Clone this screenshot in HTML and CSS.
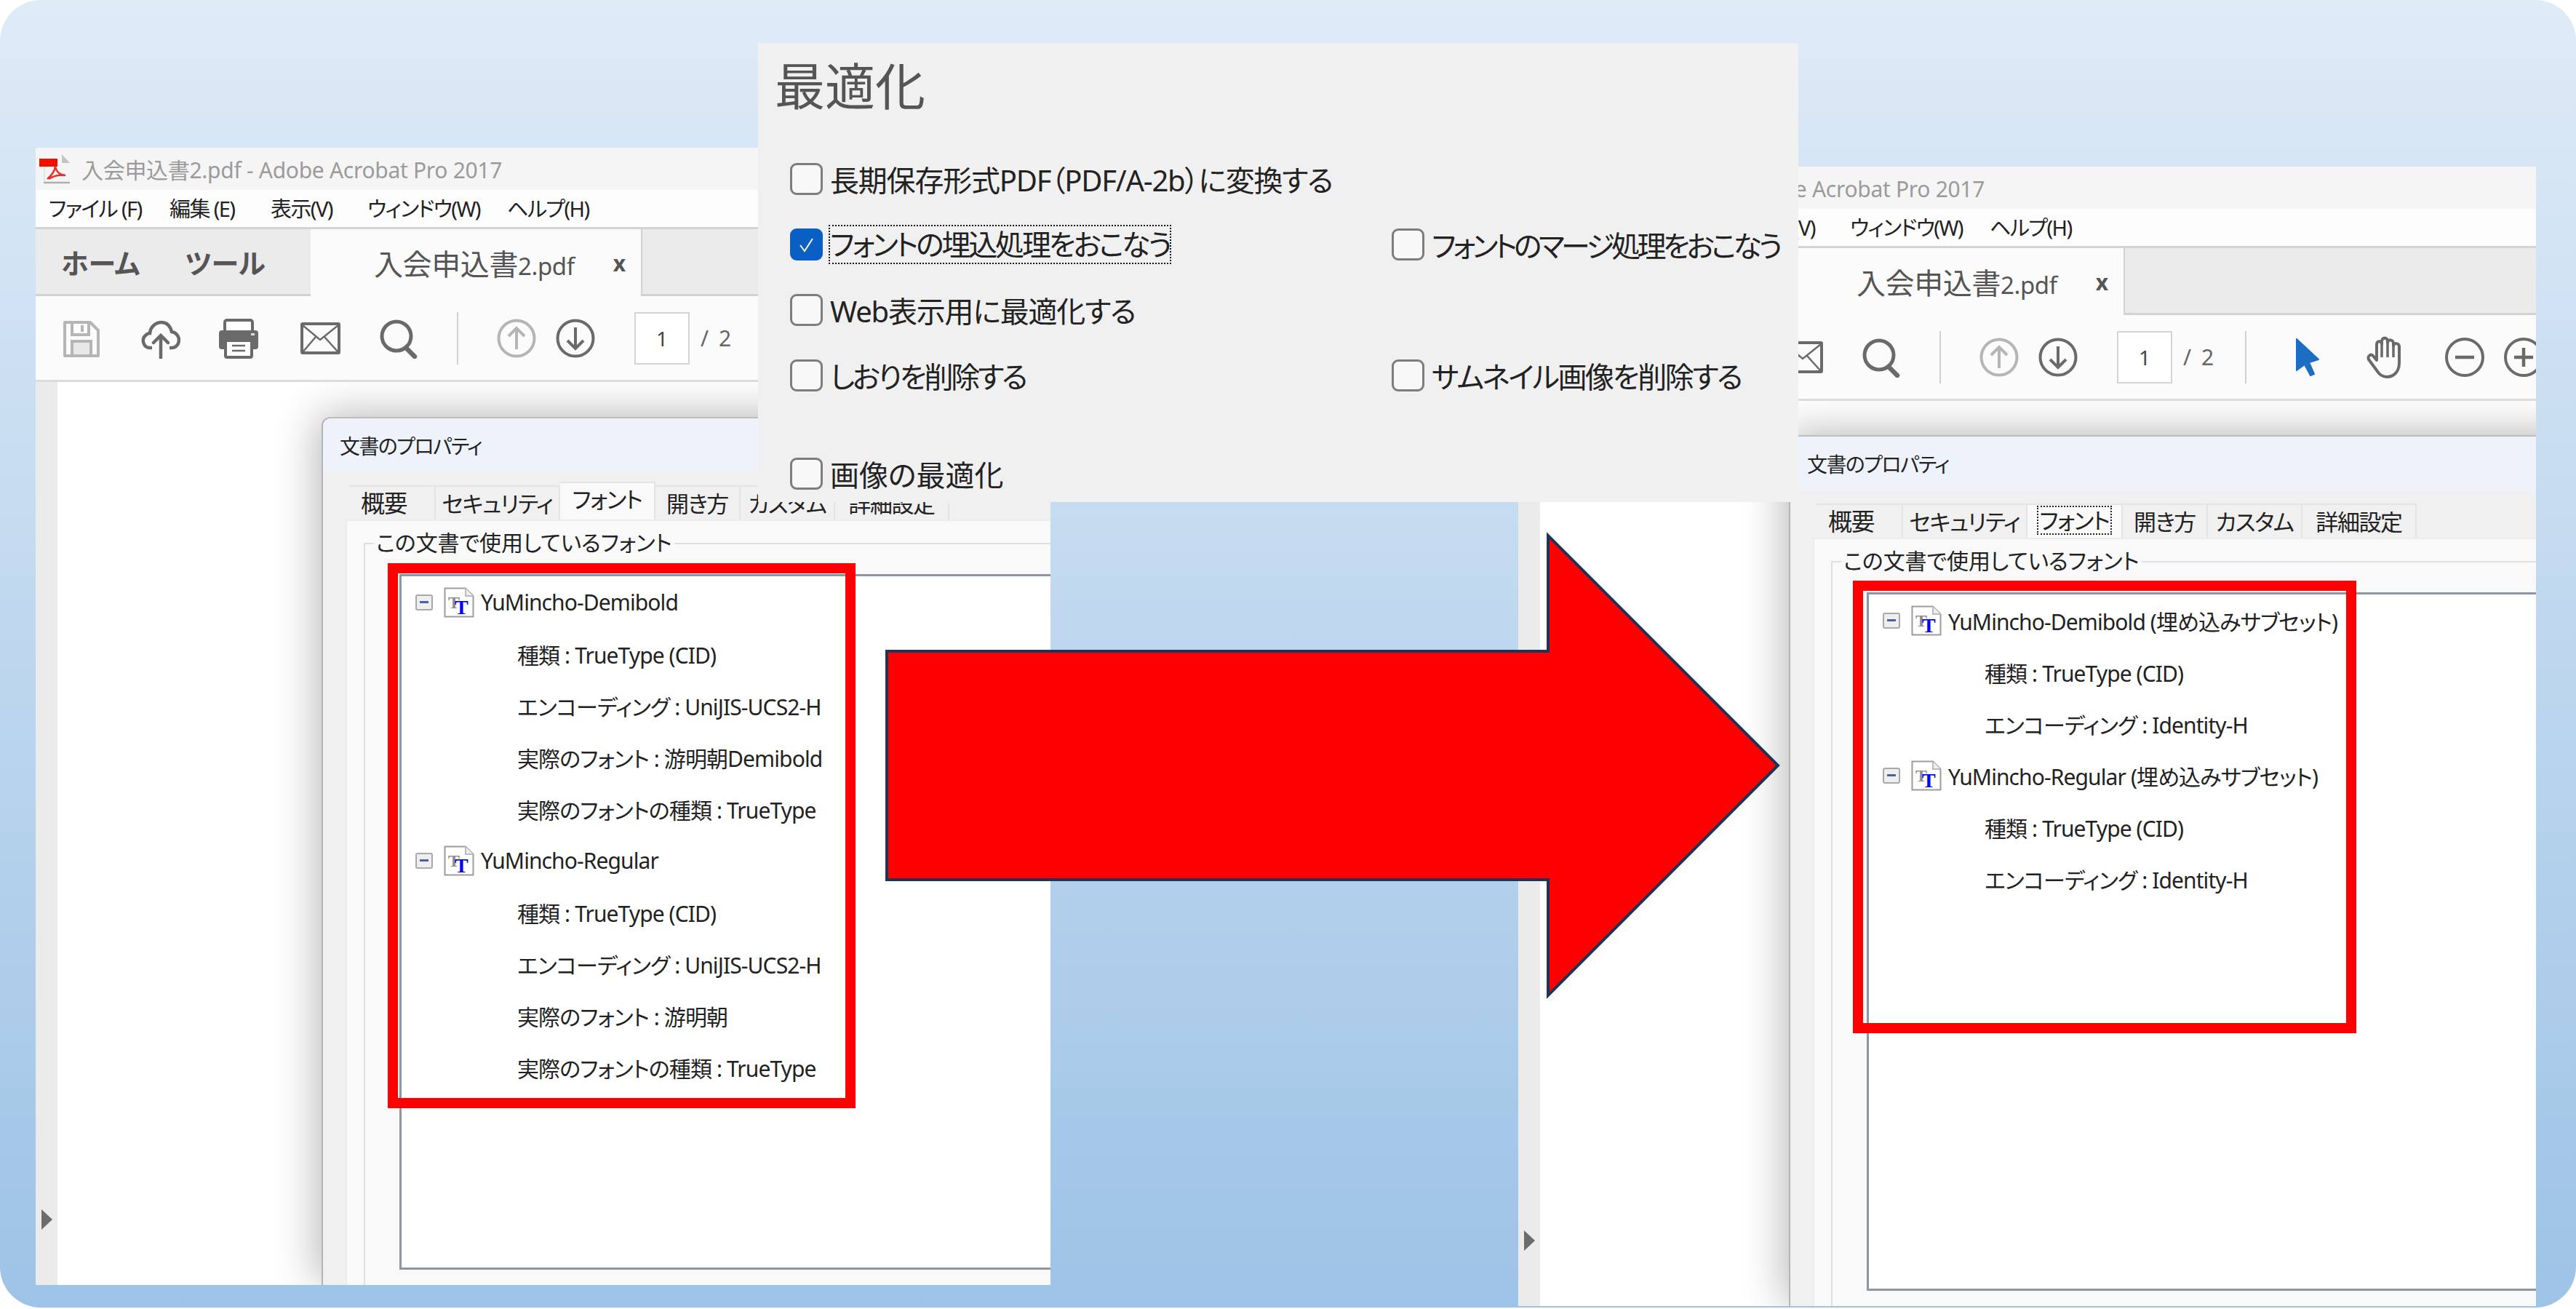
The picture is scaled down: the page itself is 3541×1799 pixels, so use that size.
FILE: index.html
```html
<!DOCTYPE html>
<html lang="ja">
<head>
	<meta charset="utf-8">
	<title>フォントの埋込処理</title>
	<link rel="stylesheet" href="styles.css">
</head>

<body>
	<svg class="defs" width="0" height="0">
		<symbol id="i-save" viewBox="0 0 56 56">
			<path d="M5 6H40L51 17V52H5Z" fill="none" stroke="#b5b5b5" stroke-width="4" stroke-linejoin="round"/>
			<path d="M15 6V23H38V8" fill="none" stroke="#b5b5b5" stroke-width="4"/>
			<rect x="27" y="10" width="4" height="9" fill="#b5b5b5"/>
			<path d="M15 52V32H41V52Z" fill="#e8e8e8" stroke="#b5b5b5" stroke-width="4"/>
		</symbol>
		<symbol id="i-cloud" viewBox="0 0 56 56">
			<path d="M17 41H14C5 41 2 29 8 24C10 22 12 21 14 21C15 11 23 6 30 6C37 6 42 11 44 19C50 20 54 25 54 30C54 37 49 41 44 41H41" fill="none" stroke="#6a6a6a" stroke-width="4.5"/>
			<path d="M29 55V25M19 34L29 24L39 34" fill="none" stroke="#6a6a6a" stroke-width="4.5" stroke-linecap="round"/>
		</symbol>
		<symbol id="i-print" viewBox="0 0 56 56">
			<rect x="9" y="3" width="38" height="24" rx="3" fill="#fff" stroke="#6a6a6a" stroke-width="4"/>
			<path d="M5 17H51A4 4 0 0 1 55 21V39A4 4 0 0 1 51 43H5A4 4 0 0 1 1 39V21A4 4 0 0 1 5 17Z" fill="#6a6a6a"/>
			<rect x="45" y="21" width="5" height="3" fill="#ddd"/>
			<rect x="10" y="31" width="36" height="23" rx="2" fill="#fff" stroke="#6a6a6a" stroke-width="4"/>
			<path d="M19 38H37M19 45H37" stroke="#6a6a6a" stroke-width="2.5"/>
		</symbol>
		<symbol id="i-mail" viewBox="0 0 56 56">
			<rect x="3" y="8" width="51" height="40" rx="1" fill="none" stroke="#6a6a6a" stroke-width="4"/>
			<path d="M4 10L28 30L53 10M4 47L22 26M53 47L34 26" fill="none" stroke="#6a6a6a" stroke-width="2.5"/>
		</symbol>
		<symbol id="i-search" viewBox="0 0 56 56">
			<circle cx="25" cy="25" r="20" fill="none" stroke="#6a6a6a" stroke-width="5"/>
			<path d="M38 41L50 53" stroke="#6a6a6a" stroke-width="6.5" stroke-linecap="round"/>
		</symbol>
		<symbol id="i-up" viewBox="0 0 56 56">
			<circle cx="28" cy="28" r="24.5" fill="none" stroke="#b5b5b5" stroke-width="4"/>
			<path d="M28 43V15M17 25L28 14L39 25" fill="none" stroke="#b5b5b5" stroke-width="4"/>
		</symbol>
		<symbol id="i-down" viewBox="0 0 56 56">
			<circle cx="28" cy="28" r="24.5" fill="none" stroke="#6a6a6a" stroke-width="4"/>
			<path d="M28 13V41M17 31L28 42L39 31" fill="none" stroke="#6a6a6a" stroke-width="4"/>
		</symbol>
		<symbol id="i-pointer" viewBox="0 0 56 56">
			<path d="M12 3V46L23 38L31 53L36 51L29 35L42 31Z" fill="#1b6ec2" stroke="#1b6ec2" stroke-width="2" stroke-linejoin="round"/>
		</symbol>
		<symbol id="i-hand" viewBox="0 0 56 60">
			<path d="M14 48L3 33C1 28 6 25 9 28L14 34V12C14 7 21 7 21 12V8C21 2 29 2 29 8V10C29 5 37 5 37 11V14C37 10 45 10 45 15V38C45 50 37 57 28 57C22 57 17 53 14 48Z" fill="none" stroke="#6a6a6a" stroke-width="4" stroke-linejoin="round"/>
			<path d="M21 12V30M29 8V30M37 11V30" stroke="#6a6a6a" stroke-width="3.5"/>
		</symbol>
		<symbol id="i-minus" viewBox="0 0 56 56">
			<circle cx="28" cy="28" r="25" fill="none" stroke="#6a6a6a" stroke-width="4"/>
			<path d="M15 28H41" stroke="#6a6a6a" stroke-width="4.5"/>
		</symbol>
		<symbol id="i-plus" viewBox="0 0 56 56">
			<circle cx="28" cy="28" r="25" fill="none" stroke="#6a6a6a" stroke-width="4"/>
			<path d="M15 28H41M28 15V41" stroke="#6a6a6a" stroke-width="4.5"/>
		</symbol>
		<symbol id="i-pdf" viewBox="0 0 44 44">
			<path d="M8 18V40" stroke="#e4e4e4" stroke-width="2"/>
			<path d="M32 2L43 14H32Z" fill="#c4c4c4"/>
			<path d="M7 41H43" stroke="#b0b0b0" stroke-width="2.5"/>
			<rect x="1" y="8" width="25" height="11" fill="#ee1100"/>
			<path d="M12 36C18 31 22 26 23 19C25 27 29 30 37 31C29 30 21 31 14 36" fill="none" stroke="#e8302a" stroke-width="2.5"/>
		</symbol>
		<symbol id="i-page" viewBox="0 0 42 42">
			<path d="M1.5 1.5H30L40.5 12V40.5H1.5Z" fill="#fff" stroke="#9c9c9c" stroke-width="2"/>
			<path d="M30 1.5V12H40.5" fill="#eee" stroke="#bbb" stroke-width="2"/>
		</symbol>
	</svg>

	<div class="slide">

		<!-- left window -->
		<div class="window win-left">
			<div class="titlebar">
				<svg class="pdf-icon"><use href="#i-pdf"/></svg>
				<span>入会申込書2.pdf - Adobe Acrobat Pro 2017</span>
			</div>
			<div class="menubar">
				<span class="m1">ファイル (F)</span>
				<span class="m2">編集 (E)</span>
				<span class="m3">表示(V)</span>
				<span class="m4">ウィンドウ(W)</span>
				<span class="m5">ヘルプ(H)</span>
			</div>
			<div class="tabbar">
				<div class="nav-tabs"><span>ホーム</span><span>ツール</span></div>
				<div class="doc-tab"><span>入会申込書<small>2.pdf</small></span><b>x</b></div>
				<div class="tab-rest"></div>
			</div>
			<div class="toolbar">
				<svg class="tool t-save"><use href="#i-save"/></svg>
				<svg class="tool t-next"><use href="#i-cloud"/></svg>
				<svg class="tool t-next"><use href="#i-print"/></svg>
				<svg class="tool t-mail"><use href="#i-mail"/></svg>
				<svg class="tool t-next"><use href="#i-search"/></svg>
				<i class="sep"></i>
				<svg class="tool t-up"><use href="#i-up"/></svg>
				<svg class="tool t-down"><use href="#i-down"/></svg>
				<div class="pagebox">1</div>
				<span class="pagecount">/ 2</span>
			</div>
			<div class="viewer">
				<div class="sidebar"><i class="expand"></i></div>
				<div class="page">
					<div class="dialog">
						<div class="dlg-title">文書のプロパティ</div>
						<div class="dlg-tabs">
							<span class="w1">概要</span>
							<span class="w2">セキュリティ</span>
							<span class="w3 active">フォント</span>
							<span class="w4">開き方</span>
							<span class="w5">カスタム</span>
							<span class="w6">詳細設定</span>
						</div>
						<div class="dlg-panel">
							<div class="group">
								<div class="legend">この文書で使用しているフォント</div>
								<div class="fontlist">
									<div class="row root"><i class="minus"></i><svg class="doc-icon" viewBox="0 0 42 42"><use href="#i-page"/><text x="6" y="29" class="doc-t-back">T</text><text x="15" y="37" class="doc-t-front">T</text></svg><span>YuMincho-Demibold</span></div>
									<div class="row"><span>種類 : TrueType (CID)</span></div>
									<div class="row"><span>エンコーディング : UniJIS-UCS2-H</span></div>
									<div class="row"><span>実際のフォント : 游明朝Demibold</span></div>
									<div class="row"><span>実際のフォントの種類 : TrueType</span></div>
									<div class="row root"><i class="minus"></i><svg class="doc-icon" viewBox="0 0 42 42"><use href="#i-page"/><text x="6" y="29" class="doc-t-back">T</text><text x="15" y="37" class="doc-t-front">T</text></svg><span>YuMincho-Regular</span></div>
									<div class="row"><span>種類 : TrueType (CID)</span></div>
									<div class="row"><span>エンコーディング : UniJIS-UCS2-H</span></div>
									<div class="row"><span>実際のフォント : 游明朝</span></div>
									<div class="row"><span>実際のフォントの種類 : TrueType</span></div>
								</div>
							</div>
						</div>
					</div>
				</div>
			</div>
		</div>

		<!-- right window -->
		<div class="window win-right">
			<div class="titlebar">
				<svg class="pdf-icon"><use href="#i-pdf"/></svg>
				<span>入会申込書2.pdf - Adobe Acrobat Pro 2017</span>
			</div>
			<div class="menubar">
				<span class="m1">ファイル (F)</span>
				<span class="m2">編集 (E)</span>
				<span class="m3">表示(V)</span>
				<span class="m4">ウィンドウ(W)</span>
				<span class="m5">ヘルプ(H)</span>
			</div>
			<div class="tabbar">
				<div class="nav-tabs"><span>ホーム</span><span>ツール</span></div>
				<div class="doc-tab"><span>入会申込書<small>2.pdf</small></span><b>x</b></div>
				<div class="tab-rest"></div>
			</div>
			<div class="toolbar">
				<svg class="tool t-save"><use href="#i-save"/></svg>
				<svg class="tool t-next"><use href="#i-cloud"/></svg>
				<svg class="tool t-next"><use href="#i-print"/></svg>
				<svg class="tool t-mail"><use href="#i-mail"/></svg>
				<svg class="tool t-next"><use href="#i-search"/></svg>
				<i class="sep"></i>
				<svg class="tool t-up"><use href="#i-up"/></svg>
				<svg class="tool t-down"><use href="#i-down"/></svg>
				<div class="pagebox">1</div>
				<span class="pagecount">/ 2</span>
				<i class="sep sep2"></i>
				<svg class="tool t-pointer"><use href="#i-pointer"/></svg>
				<svg class="tool t-hand"><use href="#i-hand"/></svg>
				<svg class="tool t-minus"><use href="#i-minus"/></svg>
				<svg class="tool t-plus"><use href="#i-plus"/></svg>
			</div>
			<div class="viewer">
				<div class="sidebar"><i class="expand"></i></div>
				<div class="page">
					<div class="dialog">
						<div class="dlg-title">文書のプロパティ</div>
						<div class="dlg-tabs">
							<span class="w1">概要</span>
							<span class="w2">セキュリティ</span>
							<span class="w3 focused"><em>フォント</em></span>
							<span class="w4">開き方</span>
							<span class="w5">カスタム</span>
							<span class="w6">詳細設定</span>
						</div>
						<div class="dlg-panel">
							<div class="group">
								<div class="legend">この文書で使用しているフォント</div>
								<div class="fontlist">
									<div class="row root"><i class="minus"></i><svg class="doc-icon" viewBox="0 0 42 42"><use href="#i-page"/><text x="6" y="29" class="doc-t-back">T</text><text x="15" y="37" class="doc-t-front">T</text></svg><span>YuMincho-Demibold (埋め込みサブセット)</span></div>
									<div class="row"><span>種類 : TrueType (CID)</span></div>
									<div class="row"><span>エンコーディング : Identity-H</span></div>
									<div class="row root"><i class="minus"></i><svg class="doc-icon" viewBox="0 0 42 42"><use href="#i-page"/><text x="6" y="29" class="doc-t-back">T</text><text x="15" y="37" class="doc-t-front">T</text></svg><span>YuMincho-Regular (埋め込みサブセット)</span></div>
									<div class="row"><span>種類 : TrueType (CID)</span></div>
									<div class="row"><span>エンコーディング : Identity-H</span></div>
								</div>
							</div>
						</div>
					</div>
				</div>
			</div>
		</div>

		<!-- optimize panel laid over both windows -->
		<div class="optimize">
			<h1>最適化</h1>
			<div class="opt-row">
				<label class="opt"><i class="check"></i><span class="ls-wide">長期保存形式PDF（PDF/A-2b）に変換する</span></label>
			</div>
			<div class="opt-row">
				<label class="opt"><i class="check on"><svg viewBox="0 0 45 44"><path d="M14 23L20 31L31 14" fill="none" stroke="#fff" stroke-width="2"/></svg></i><span class="focus ls-tight">フォントの埋込処理をおこなう</span></label>
				<label class="opt"><i class="check"></i><span class="ls-tighter">フォントのマージ処理をおこなう</span></label>
			</div>
			<div class="opt-row">
				<label class="opt"><i class="check"></i><span class="ls-wide">Web表示用に最適化する</span></label>
			</div>
			<div class="opt-row">
				<label class="opt"><i class="check"></i><span class="ls-tight">しおりを削除する</span></label>
				<label class="opt"><i class="check"></i><span>サムネイル画像を削除する</span></label>
			</div>
			<div class="opt-row last">
				<label class="opt"><i class="check"></i><span class="ls-none">画像の最適化</span></label>
			</div>
		</div>

		<div class="redbox red-left"></div>
		<div class="redbox red-right"></div>

		<svg class="arrow" width="1235" height="645">
			<polygon points="4,165 913,165 913,6 1229,322 913,638 913,479 4,479" fill="#ff0000" stroke="#1f3358" stroke-width="4"/>
		</svg>
	</div>
</body>
</html>
```

FILE: styles.css
```css
body {
	margin: 0;
	background: #fff;
	overflow: hidden;
	font-family: "Noto Sans", "Noto Sans CJK JP", sans-serif;
	font-feature-settings: "palt";
	color: #222;
}

.defs {
	position: absolute;
}

.slide {
	position: relative;
	width: 3541px;
	height: 1797px;
	border-radius: 56px;
	background: linear-gradient(#dfebf7, #9dc3e6);
	overflow: hidden;
}

/* acrobat windows */
.window {
	position: absolute;
	display: flex;
	flex-direction: column;
	background: #fff;
	overflow: hidden;
}

.win-left {
	left: 49px;
	top: 203px;
	width: 1395px;
	height: 1563px;
}

.win-right {
	left: 2087px;
	top: 229px;
	width: 1399px;
	height: 1566px;
}

.titlebar {
	display: flex;
	align-items: center;
	flex: none;
	height: 58px;
	background: #f5f5f5;
	color: #9b9b9b;
	font-size: 30px;
	letter-spacing: -0.3px;
	white-space: nowrap;
}

.pdf-icon {
	width: 44px;
	height: 44px;
	margin: 0 15px 0 4px;
}

.menubar {
	display: flex;
	align-items: center;
	flex: none;
	height: 48px;
	padding-bottom: 3px;
	background: #fdfdfd;
	border-bottom: 3px solid #d4d4d4;
	font-size: 29px;
	letter-spacing: -1.6px;
	white-space: nowrap;
}

.m1 { margin-left: 18px; width: 166px; }
.m2 { width: 139px; }
.m3 { width: 133px; }
.m4 { width: 192px; }

.tabbar {
	display: flex;
	flex: none;
	height: 92px;
}

.nav-tabs {
	display: flex;
	align-items: center;
	gap: 62px;
	box-sizing: border-box;
	width: 378px;
	padding-left: 35px;
	background: #ebebeb;
	border-bottom: 3px solid #d2d2d2;
	color: #555;
	font-size: 38px;
	font-weight: 700;
}

.doc-tab {
	display: flex;
	align-items: center;
	box-sizing: border-box;
	width: 456px;
	padding-left: 87px;
	background: #fbfbfb;
	border-right: 2px solid #d2d2d2;
	color: #555;
	font-size: 40px;
	letter-spacing: -0.4px;
}

.doc-tab small {
	font-size: 33px;
}

.doc-tab b {
	margin-left: 53px;
	color: #555;
	font-size: 30px;
}

.tab-rest {
	flex: 1;
	background: #ebebeb;
	border-bottom: 3px solid #d2d2d2;
}

.toolbar {
	display: flex;
	align-items: center;
	flex: none;
	box-sizing: border-box;
	height: 118px;
	background: #fbfbfb;
	border-bottom: 3px solid #dcdcdc;
}

.tool {
	flex: none;
	width: 56px;
	height: 56px;
}

.t-save { margin-left: 35px; }
.t-next { margin-left: 52px; }
.t-mail { margin-left: 56px; }
.t-up { margin-left: 52px; }
.t-down { margin-left: 25px; }
.t-pointer { margin-left: 57px; }
.t-hand { margin-left: 52px; height: 60px; }
.t-minus { margin-left: 51px; }
.t-plus { margin-left: 25px; }

.sep {
	flex: none;
	width: 2px;
	height: 72px;
	margin-left: 52px;
	background: #d0d0d0;
}

.sep2 {
	margin-left: 43px;
}

.pagebox {
	flex: none;
	box-sizing: border-box;
	width: 76px;
	height: 72px;
	margin-left: 53px;
	background: #fff;
	border: 2px solid #d4d4d4;
	text-align: center;
	line-height: 68px;
	font-size: 28px;
	color: #444;
}

.pagecount {
	flex: none;
	width: 42px;
	margin-left: 15px;
	color: #666;
	font-size: 30px;
	letter-spacing: 3px;
	white-space: pre;
}

.viewer {
	flex: 1;
	display: flex;
	min-height: 0;
}

.sidebar {
	position: relative;
	flex: none;
	width: 30px;
	background: #ebebeb;
}

.expand {
	position: absolute;
	left: 8px;
	bottom: 76px;
	border-left: 15px solid #6c6c6c;
	border-top: 14px solid transparent;
	border-bottom: 14px solid transparent;
}

.page {
	flex: 1;
	display: flex;
	box-sizing: border-box;
	padding: 48px 0 0 363px;
	background: #fff;
	overflow: hidden;
}

.win-right .page {
	padding: 47px 0 0 342px;
}

/* properties dialog */
.dialog {
	flex: 0 0 1500px;
	display: flex;
	flex-direction: column;
	background: #f0f0f0;
	border-top: 2px solid #bdbdbd;
	border-left: 2px solid #b5b5b5;
	border-top-left-radius: 12px;
	box-shadow: -4px -2px 60px rgba(0, 0, 0, 0.3);
}

.dlg-title {
	display: flex;
	align-items: center;
	flex: none;
	height: 74px;
	padding-left: 23px;
	background: #eef3fb;
	border-top-left-radius: 12px;
	font-size: 28px;
	letter-spacing: -1.6px;
}

.dlg-tabs {
	display: flex;
	align-items: flex-end;
	flex: none;
	height: 52px;
	margin-top: 13px;
	padding-left: 36px;
	font-size: 31px;
	letter-spacing: -1.4px;
}

.dlg-tabs span {
	display: flex;
	align-items: center;
	justify-content: center;
	box-sizing: border-box;
	height: 47px;
	padding-bottom: 3px;
	background: #f0f0f0;
	border: 2px solid #e4e4e4;
	border-bottom: none;
	border-left: none;
	white-space: nowrap;
}

.dlg-tabs .w1 { width: 119px; padding-right: 22px; font-size: 33px; }
.dlg-tabs .w2 { width: 171px; }
.dlg-tabs .w3 { width: 131px; }
.dlg-tabs .w4 { width: 117px; }
.dlg-tabs .w5 { width: 130px; }
.dlg-tabs .w6 { width: 157px; }

.dlg-tabs .active {
	height: 52px;
	background: #f9f9f9;
	padding-bottom: 10px;
}

.dlg-tabs .focused {
	background: #f9f9f9;
}

.dlg-tabs em {
	padding: 0 3px;
	font-style: normal;
	outline: 2px dotted #222;
	outline-offset: -1px;
	line-height: 38px;
}

.dlg-panel {
	flex: 1;
	display: flex;
	min-height: 0;
	margin-left: 31px;
	padding: 30px 0 0 23px;
	background: #f9f9f9;
	border-left: 2px solid #ececec;
	border-top: 2px solid #ececec;
}

.group {
	flex: 1;
	display: flex;
	flex-direction: column;
	min-height: 0;
	padding: 0 0 21px 47px;
	border-left: 2px solid #e0e0e0;
	border-top: 2px solid #e0e0e0;
}

.legend {
	align-self: flex-start;
	height: 40px;
	margin: -22px 0 0 -35px;
	padding: 0 3px;
	background: #f9f9f9;
	font-size: 30px;
	line-height: 40px;
	letter-spacing: -0.1px;
	white-space: nowrap;
}

.fontlist {
	flex: 1;
	margin-top: 23px;
	background: #fff;
	border: 3px solid #8f96a3;
	border-right: none;
}

.row {
	display: flex;
	align-items: center;
	height: 71px;
	padding-left: 159px;
	font-size: 30px;
	letter-spacing: -0.9px;
	white-space: nowrap;
}

.row.root {
	padding-left: 19px;
}

.minus {
	position: relative;
	flex: none;
	box-sizing: border-box;
	width: 24px;
	height: 22px;
	background: #eee;
	border: 2px solid #a9a9a9;
	border-radius: 3px;
}

.minus::after {
	content: "";
	position: absolute;
	left: 4px;
	right: 4px;
	top: 7px;
	height: 3px;
	background: #4a5fa8;
}

.doc-icon {
	flex: none;
	width: 42px;
	height: 42px;
	margin: 0 9px 0 15px;
}

.doc-t-back {
	font: bold 24px "Liberation Serif", serif;
	fill: #8c8c8c;
}

.doc-t-front {
	font: bold 28px "Liberation Serif", serif;
	fill: #0000ee;
}

/* optimize panel */
.optimize {
	position: absolute;
	left: 1042px;
	top: 59px;
	box-sizing: border-box;
	width: 1430px;
	height: 631px;
	padding-left: 44px;
	background: #f0f0f0;
	font-size: 40px;
	letter-spacing: -2.4px;
}

.optimize h1 {
	height: 142px;
	margin: 0 0 0 -21px;
	color: #555;
	font-size: 69px;
	font-weight: 400;
	letter-spacing: 0;
	line-height: 118px;
}

.opt-row {
	display: flex;
	align-items: center;
	height: 90px;
}

.opt-row.last {
	margin-top: 45px;
}

.opt {
	flex: none;
	display: flex;
	align-items: center;
	width: 827px;
	white-space: nowrap;
}

.ls-wide { letter-spacing: -1.2px; }
.ls-tight { letter-spacing: -3.2px; }
.ls-tighter { letter-spacing: -4.5px; }
.ls-none { letter-spacing: 0; }

.check {
	flex: none;
	box-sizing: border-box;
	width: 45px;
	height: 44px;
	margin-right: 10px;
	background: #f8f8f8;
	border: 3px solid #7d7d7d;
	border-radius: 9px;
}

.check svg {
	display: block;
	width: 45px;
	height: 44px;
	margin: -3px;
}

.check.on {
	background: #0a5fc4;
	border-color: #0a5fc4;
}

.focus {
	outline: 2px dotted #111;
	line-height: 50px;
}

/* overlays */
.redbox {
	position: absolute;
	box-sizing: border-box;
	border: 14px solid #ff0000;
}

.red-left {
	left: 533px;
	top: 774px;
	width: 643px;
	height: 749px;
}

.red-right {
	left: 2547px;
	top: 798px;
	width: 692px;
	height: 622px;
}

.arrow {
	position: absolute;
	left: 1215px;
	top: 730px;
}
```
